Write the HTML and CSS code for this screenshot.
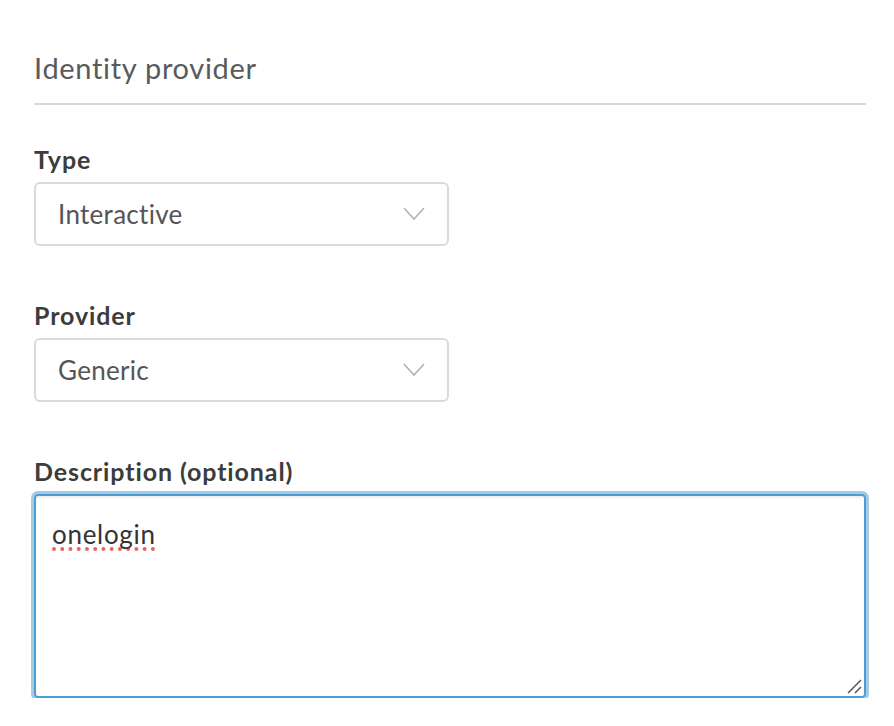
FILE: index.html
```html
<!DOCTYPE html>
<html lang="en">
<head>
<meta charset="utf-8">
<title>Identity provider</title>
<link rel="stylesheet" href="styles.css">
</head>
<body>
<section class="panel">
  <h2 class="panel-title">Identity provider</h2>
  <div class="field">
    <label class="field-label">Type</label>
    <div class="select">
      <span class="select-value">Interactive</span>
      <svg class="chevron" width="22" height="14" viewBox="0 0 22 14"><path d="M1 1 L11 12 L21 1" fill="none" stroke="#b3b3b3" stroke-width="1.6"/></svg>
    </div>
  </div>
  <div class="field">
    <label class="field-label">Provider</label>
    <div class="select">
      <span class="select-value">Generic</span>
      <svg class="chevron" width="22" height="14" viewBox="0 0 22 14"><path d="M1 1 L11 12 L21 1" fill="none" stroke="#b3b3b3" stroke-width="1.6"/></svg>
    </div>
  </div>
  <div class="field">
    <label class="field-label">Description (optional)</label>
    <div class="textarea">
      <span class="misspelled">onelogin</span>
      <svg class="grip" width="16" height="16" viewBox="0 0 16 16"><path d="M2 15 L15 2 M9 15 L15 9" stroke="#555" stroke-width="1.5" fill="none"/></svg>
    </div>
  </div>
</section>
</body>
</html>
```
FILE: styles.css
```css
html, body {
  margin: 0;
  padding: 0;
  background: #fff;
}
body {
  font-family: "Lato", "Open Sans", sans-serif;
}
.panel {
  padding: 48px 28px 0 34px;
}
.panel-title {
  margin: 0;
  font-size: 29px;
  font-weight: 400;
  letter-spacing: 0.7px;
  color: #5a5a5a;
  line-height: 40px;
  padding-bottom: 15px;
  border-bottom: 2px solid #d8d8d8;
}
.field {
  margin-top: 39px;
  display: flex;
  flex-direction: column;
}
.field + .field {
  margin-top: 54px;
}
.field-label {
  font-size: 25px;
  font-weight: 700;
  letter-spacing: 0.9px;
  color: #3c3c3c;
  line-height: 30px;
  margin-bottom: 8px;
}
.select {
  box-sizing: border-box;
  width: 415px;
  height: 64px;
  border: 2px solid #dadada;
  border-radius: 6px;
  display: flex;
  align-items: center;
  justify-content: space-between;
  padding: 0 22px 0 22px;
}
.select-value {
  font-size: 26px;
  letter-spacing: 0.3px;
  color: #555;
}
.chevron {
  display: block;
}
.textarea {
  position: relative;
  box-sizing: border-box;
  height: 204px;
  border: 2px solid #4a9ed6;
  border-radius: 4px;
  box-shadow: 0 0 0 3px #a9c9e0, inset 0 2px 2px #eee;
  padding: 21px 16px;
  font-size: 26px;
  line-height: 34px;
  letter-spacing: 0.7px;
  color: #333;
}
.misspelled {
  text-decoration: underline dotted #f06060;
  text-decoration-thickness: 4px;
  text-underline-offset: 3px;
  text-decoration-skip-ink: none;
}
.grip {
  position: absolute;
  right: 2px;
  bottom: 2px;
}
```
